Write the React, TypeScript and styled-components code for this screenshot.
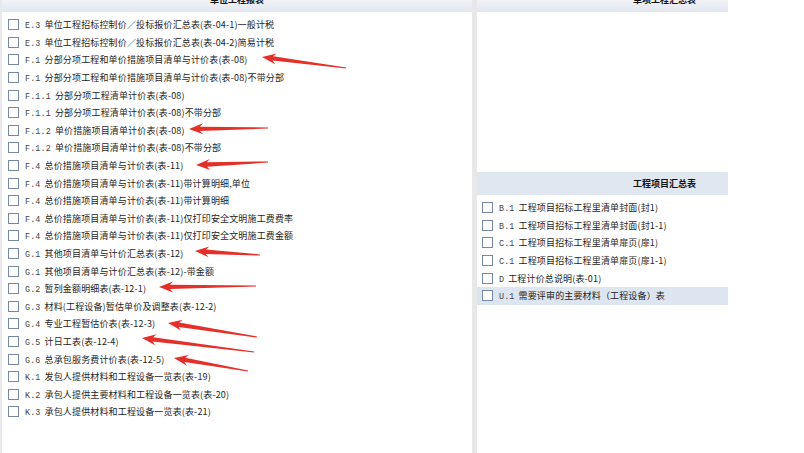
import styled, { createGlobalStyle } from 'styled-components';

const GlobalStyle = createGlobalStyle`
  html, body {
    margin: 0;
    padding: 0;
    background: #fff;
  }
  body {
    font-family: "Noto Sans CJK SC", "Liberation Sans", sans-serif;
  }
`;

const Page = styled.div`
  position: relative;
  display: flex;
  width: 804px;
  height: 453px;
  overflow: hidden;
  background: #fff;
`;

const LeftPanel = styled.section`
  width: 470px;
  border-left: 2px solid #e9e9e9;
  display: flex;
  flex-direction: column;
`;

const Splitter = styled.div`
  width: 5px;
  background: #e8e8e8;
`;

const RightPanel = styled.section`
  width: 251px;
  display: flex;
  flex-direction: column;
`;

// the view is scrolled a little, so the title only shows its lower half
const TopHeader = styled.header<{ $shift?: number }>`
  height: 12px;
  overflow: hidden;
  background: linear-gradient(#f1f3f7, #e2e6ee);
  display: flex;
  justify-content: center;
  padding-left: ${p => p.$shift ?? 0}px;
  span {
    margin-top: -8px;
    font-size: 9px;
    font-weight: 700;
    line-height: 16px;
    color: #111;
  }
`;

const SectionHeader = styled.header`
  height: 23px;
  background: #e0e7f0;
  display: flex;
  align-items: center;
  justify-content: center;
  padding-left: 124px;
  font-size: 9px;
  font-weight: 700;
  color: #111;
`;

const Blank = styled.div<{ $h: number }>`
  height: ${p => p.$h}px;
`;

const List = styled.ul`
  list-style: none;
  margin: 0;
  padding: 4px 0 0;
`;

const Row = styled.li<{ $active?: boolean; $indent: number }>`
  height: 17.6px;
  display: flex;
  align-items: center;
  gap: 6px;
  padding-left: ${p => p.$indent}px;
  background: ${p => (p.$active ? '#dce5f0' : 'transparent')};
  white-space: nowrap;
`;

const Box = styled.span`
  width: 9px;
  height: 9px;
  border: 1px solid #7589a6;
  background: #fff;
  flex-shrink: 0;
`;

const Label = styled.span`
  font-size: 9px;
  color: #1d1d1d;
  letter-spacing: 0.15px;
`;

const Code = styled.span`
  font-family: "Liberation Mono", monospace;
  font-size: 8.4px;
  color: #444;
  margin-right: 4px;
`;

const Overlay = styled.svg`
  position: absolute;
  left: 0;
  top: 0;
  pointer-events: none;
`;

const unitReports: [string, string][] = [
  ['E.3', '单位工程招标控制价／投标报价汇总表(表-04-1)一般计税'],
  ['E.3', '单位工程招标控制价／投标报价汇总表(表-04-2)简易计税'],
  ['F.1', '分部分项工程和单价措施项目清单与计价表(表-08)'],
  ['F.1', '分部分项工程和单价措施项目清单与计价表(表-08)不带分部'],
  ['F.1.1', '分部分项工程清单计价表(表-08)'],
  ['F.1.1', '分部分项工程清单计价表(表-08)不带分部'],
  ['F.1.2', '单价措施项目清单计价表(表-08)'],
  ['F.1.2', '单价措施项目清单计价表(表-08)不带分部'],
  ['F.4', '总价措施项目清单与计价表(表-11)'],
  ['F.4', '总价措施项目清单与计价表(表-11)带计算明细,单位'],
  ['F.4', '总价措施项目清单与计价表(表-11)带计算明细'],
  ['F.4', '总价措施项目清单与计价表(表-11)仅打印安全文明施工费费率'],
  ['F.4', '总价措施项目清单与计价表(表-11)仅打印安全文明施工费金额'],
  ['G.1', '其他项目清单与计价汇总表(表-12)'],
  ['G.1', '其他项目清单与计价汇总表(表-12)-带金额'],
  ['G.2', '暂列金额明细表(表-12-1)'],
  ['G.3', '材料(工程设备)暂估单价及调整表(表-12-2)'],
  ['G.4', '专业工程暂估价表(表-12-3)'],
  ['G.5', '计日工表(表-12-4)'],
  ['G.6', '总承包服务费计价表(表-12-5)'],
  ['K.1', '发包人提供材料和工程设备一览表(表-19)'],
  ['K.2', '承包人提供主要材料和工程设备一览表(表-20)'],
  ['K.3', '承包人提供材料和工程设备一览表(表-21)'],
];

const projectReports: [string, string][] = [
  ['B.1', '工程项目招标工程里清单封面(封1)'],
  ['B.1', '工程项目招标工程里清单封面(封1-1)'],
  ['C.1', '工程项目招标工程里清单扉页(扉1)'],
  ['C.1', '工程项目招标工程里清单扉页(扉1-1)'],
  ['D', '工程计价总说明(表-01)'],
  ['U.1', '需要评审的主要材料（工程设备）表'],
];

// red annotation arrows: tip (x, y) -> tail (x, y)
const arrows = [
  [262, 57, 346, 68],
  [189, 129, 268, 128],
  [196, 165, 268, 162],
  [195, 251, 260, 255],
  [159, 287, 256, 286],
  [168, 323, 257, 337],
  [142, 338, 254, 352],
  [174, 358, 248, 371],
];

function arrowPoints(tx: number, ty: number, sx: number, sy: number) {
  const len = Math.hypot(sx - tx, sy - ty);
  const dx = (sx - tx) / len;
  const dy = (sy - ty) / len;
  const nx = -dy;
  const ny = dx;
  const head = 14;
  const at = (d: number, w: number) =>
    `${(tx + dx * d + nx * w).toFixed(1)},${(ty + dy * d + ny * w).toFixed(1)}`;
  return [
    at(0, 0),
    at(head, 5.5),
    at(head - 3, 2.2),
    at(len, 0.6),
    at(len, -0.6),
    at(head - 3, -2.2),
    at(head, -5.5),
  ].join(' ');
}

const App = () => (
  <Page>
    <GlobalStyle />
    <LeftPanel>
      <TopHeader>
        <span>单位工程报表</span>
      </TopHeader>
      <List>
        {unitReports.map(([code, name], i) => (
          <Row key={i} $indent={6}>
            <Box />
            <Label>
              <Code>{code}</Code>
              {name}
            </Label>
          </Row>
        ))}
      </List>
    </LeftPanel>
    <Splitter />
    <RightPanel>
      <TopHeader $shift={124}>
        <span>单项工程汇总表</span>
      </TopHeader>
      <Blank $h={160} />
      <SectionHeader>工程项目汇总表</SectionHeader>
      <List>
        {projectReports.map(([code, name], i) => (
          <Row key={i} $indent={5} $active={code === 'U.1'}>
            <Box />
            <Label>
              <Code>{code}</Code>
              {name}
            </Label>
          </Row>
        ))}
      </List>
    </RightPanel>
    <Overlay width={804} height={453}>
      {arrows.map(([tx, ty, sx, sy], i) => (
        <polygon key={i} points={arrowPoints(tx, ty, sx, sy)} fill="#e5302a" />
      ))}
    </Overlay>
  </Page>
);

export default App;
